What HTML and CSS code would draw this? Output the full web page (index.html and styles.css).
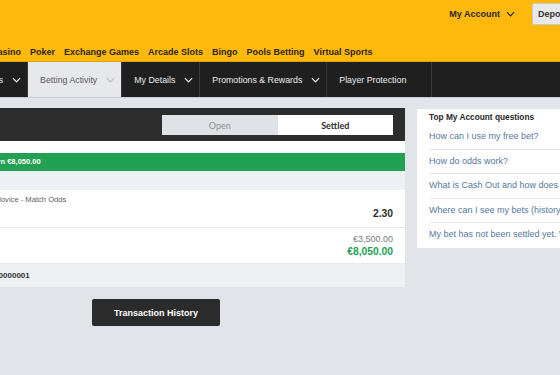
FILE: index.html
```html
<!DOCTYPE html>
<html lang="en">
<head>
<meta charset="utf-8">
<title>Betting Activity</title>
<link rel="stylesheet" href="styles.css">
</head>
<body>
<header class="topbar">
  <div class="top-row">
    <div class="account">My Account
      <svg class="chev" viewBox="0 0 10 6" width="9" height="6"><polyline points="1,1 5,5 9,1"/></svg>
    </div>
    <button class="deposit">Deposit</button>
  </div>
  <nav class="products">
    <a>Casino</a><a>Poker</a><a>Exchange Games</a><a>Arcade Slots</a><a>Bingo</a><a>Pools Betting</a><a>Virtual Sports</a>
  </nav>
</header>

<nav class="acct-nav">
  <div class="tab first"><span>Transactions</span><svg class="chev" viewBox="0 0 10 6" width="9" height="6"><polyline points="1,1 5,5 9,1"/></svg></div>
  <div class="tab active"><span>Betting Activity</span><svg class="chev" viewBox="0 0 10 6" width="9" height="6"><polyline points="1,1 5,5 9,1"/></svg></div>
  <div class="tab"><span>My Details</span><svg class="chev" viewBox="0 0 10 6" width="9" height="6"><polyline points="1,1 5,5 9,1"/></svg></div>
  <div class="tab"><span>Promotions &amp; Rewards</span><svg class="chev" viewBox="0 0 10 6" width="9" height="6"><polyline points="1,1 5,5 9,1"/></svg></div>
  <div class="tab last"><span>Player Protection</span></div>
</nav>

<main class="content">
  <section class="bets">
    <div class="panel">
      <div class="panel-head">
        <div class="toggle"><span class="opt">Open</span><span class="opt on">Settled</span></div>
      </div>
      <div class="result-wrap"><div class="result">Winning bet. Total return €8,050.00</div></div>
      <div class="spacer"></div>
      <div class="row">
        <div class="market">Bohemians Praha v Kralovice - Match Odds</div>
        <div class="odds">2.30</div>
      </div>
      <div class="row money">
        <div class="stake">€3,500.00</div>
        <div class="return">€8,050.00</div>
      </div>
      <div class="receipt">Bet Receipt: O/000000000001</div>
    </div>
    <button class="history">Transaction History</button>
  </section>

  <aside class="faq">
    <div class="faq-head">Top My Account questions</div>
    <a class="faq-item">How can I use my free bet?</a>
    <a class="faq-item">How do odds work?</a>
    <a class="faq-item">What is Cash Out and how does it work?</a>
    <a class="faq-item">Where can I see my bets (history)?</a>
    <a class="faq-item last">My bet has not been settled yet. Why?</a>
  </aside>
</main>
</body>
</html>
```

FILE: styles.css
```css
* { box-sizing: border-box; }

html, body {
  margin: 0;
  padding: 0;
}

body {
  width: 560px;
  height: 375px;
  overflow: hidden;
  background: #e1e4e8;
  font-family: "Liberation Sans", Arial, sans-serif;
  color: #333;
}

/* ---------- yellow header ---------- */
.topbar {
  height: 62px;
  background: #ffb80c;
  border-bottom: 1px solid #e3a100;
  display: flex;
  flex-direction: column;
  justify-content: space-between;
}

.top-row {
  display: flex;
  justify-content: flex-end;
  align-items: center;
  gap: 17px;
  padding-top: 3px;
  margin-right: -40px;
}

.account {
  display: flex;
  align-items: center;
  gap: 6px;
  font-size: 9px;
  font-weight: bold;
  color: #2a2a2a;
}

.chev {
  fill: none;
  stroke: currentColor;
  stroke-width: 1.3;
}

.deposit {
  height: 22px;
  width: 68px;
  padding: 0 5px;
  background: #e9e9e9;
  border: 1px solid #c9c9c9;
  border-radius: 2px;
  font-family: inherit;
  font-size: 9px;
  font-weight: bold;
  color: #333;
  text-align: left;
}

.products {
  display: flex;
  gap: 9px;
  margin-left: -9px;
  height: 17px;
  line-height: 17px;
  white-space: nowrap;
}

.products a {
  font-size: 9px;
  font-weight: bold;
  color: #2c2616;
}

/* ---------- account nav ---------- */
.acct-nav {
  height: 36px;
  background: #1f1f1f;
  border-bottom: 1px solid #c8ccd1;
  display: flex;
  white-space: nowrap;
}

.tab {
  display: flex;
  align-items: center;
  gap: 9px;
  padding: 0 6px 0 12px;
  border-right: 1px solid #3a3a3a;
  color: #ececec;
  font-size: 8.8px;
}

.tab .chev { color: #f2f2f2; }

.tab.first { margin-left: -59px; }

.tab.active {
  background: #e6e8eb;
  color: #595959;
}

.tab.active .chev { color: #b9bcc0; }

.tab.last { padding-right: 25px; }

/* ---------- content ---------- */
.content {
  display: flex;
  gap: 12px;
  padding-top: 10px;
}

.bets {
  flex: none;
  width: 498px;
  margin-left: -93px;
  display: flex;
  flex-direction: column;
}

.panel {
  background: #fff;
}

.panel-head {
  height: 33px;
  background: #2d2d2d;
  display: flex;
  justify-content: flex-end;
  align-items: center;
  padding: 0 12px 0 0;
}

.toggle {
  display: flex;
  width: 231px;
  height: 20px;
  margin-top: 1px;
}

.opt {
  flex: 1;
  display: flex;
  align-items: center;
  justify-content: center;
  background: #dfe3e8;
  color: #8d8f92;
  font-family: Lato, "Liberation Sans", sans-serif;
  font-size: 9px;
}

.opt.on {
  background: #fff;
  color: #2b2b2b;
  font-weight: bold;
}

.result-wrap {
  padding-top: 12px;
  background: #fff;
}

.result {
  height: 18px;
  line-height: 18px;
  background: #22a152;
  color: #fff;
  font-size: 7.5px;
  font-weight: bold;
  padding-left: 10px;
  white-space: nowrap;
}

.spacer {
  height: 19px;
  background: #eef0f3;
}

.row {
  display: flex;
  flex-direction: column;
  padding: 4px 12px 6px;
  border-bottom: 1px solid #e7e9ec;
  white-space: nowrap;
}

.row.money {
  padding: 5px 12px 4px;
}

.market {
  font-size: 7.6px;
  color: #5e5e5e;
  line-height: 12px;
}

.odds {
  align-self: flex-end;
  font-size: 10.3px;
  font-weight: bold;
  color: #2b2b2b;
  line-height: 15px;
}

.stake {
  align-self: flex-end;
  font-size: 9px;
  color: #7a7a7a;
  line-height: 12px;
}

.return {
  align-self: flex-end;
  font-size: 10.3px;
  font-weight: bold;
  color: #22a152;
  line-height: 14px;
}

.receipt {
  height: 23px;
  line-height: 23px;
  background: #eef0f3;
  padding-left: 12px;
  font-size: 8px;
  font-weight: bold;
  color: #333;
  white-space: nowrap;
}

.history {
  align-self: center;
  margin-top: 12px;
  width: 128px;
  height: 27px;
  background: #2b2b2b;
  border: none;
  border-radius: 2px;
  color: #fff;
  font-family: inherit;
  font-size: 9px;
  font-weight: bold;
}

/* ---------- FAQ ---------- */
.faq {
  flex: none;
  width: 220px;
  margin-top: 1px;
  align-self: flex-start;
  background: #fff;
  white-space: nowrap;
}

.faq-head {
  line-height: 16px;
  padding: 0 12px;
  font-size: 8.3px;
  font-weight: bold;
  color: #262626;
}

.faq-item {
  display: block;
  margin-left: 12px;
  line-height: 23.5px;
  border-bottom: 1px solid #e8eaed;
  font-size: 9px;
  color: #5479a3;
}

.faq-item.last {
  border-bottom: none;
  padding-bottom: 1px;
}
```
